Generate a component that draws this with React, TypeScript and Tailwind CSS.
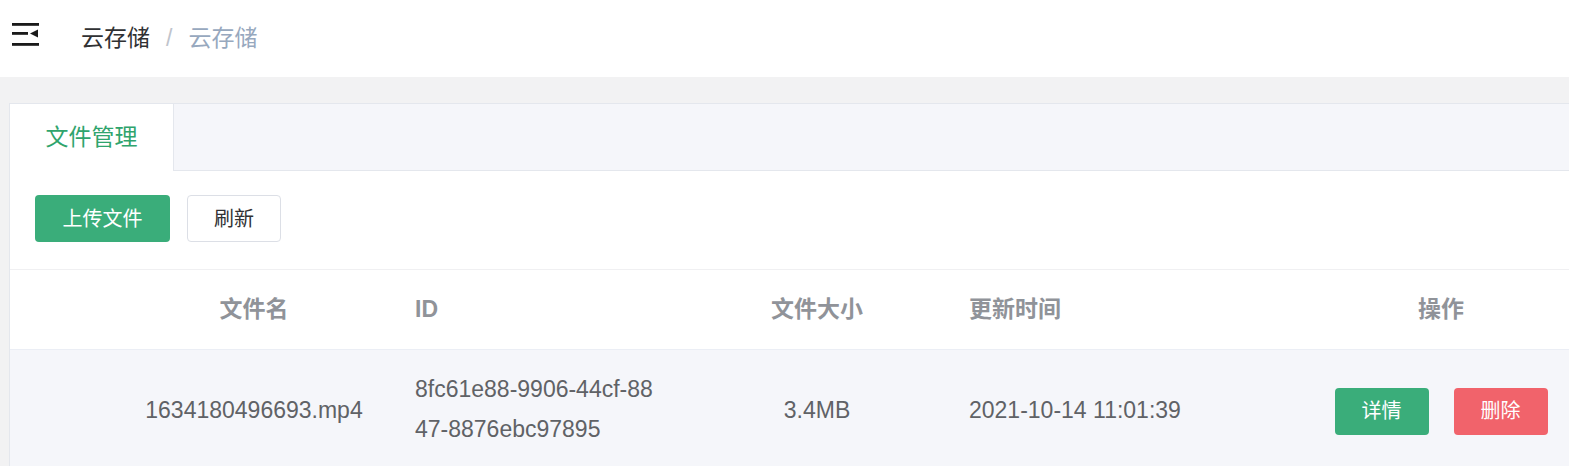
import React from "react";

const font = { fontFamily: '"Helvetica Neue", "Liberation Sans", "Noto Sans CJK SC", sans-serif' };

function Hamburger() {
  return (
    <svg width="27" height="23" viewBox="0 0 27 23" className="block">
      <rect x="0" y="0" width="27" height="2.8" fill="#1a1a1a" />
      <rect x="0" y="9" width="16" height="2.8" fill="#1a1a1a" />
      <polygon points="18,10.4 26,6.4 26,14.4" fill="#1a1a1a" />
      <rect x="0" y="20" width="27" height="2.8" fill="#1a1a1a" />
    </svg>
  );
}

export default function App() {
  return (
    <div className="w-[1569px] h-[466px] overflow-hidden bg-[#f2f2f3]" style={font}>
      {/* Top nav */}
      <div className="h-[77px] bg-white flex items-center">
        <div className="self-start mt-[23px] pl-[12px] pr-[42px]">
          <Hamburger />
        </div>
        <div className="flex items-center text-[23px]">
          <span className="text-[#303133]">云存储</span>
          <span className="text-[#c0c4cc] mx-[16px]">/</span>
          <span className="text-[#97a8be]">云存储</span>
        </div>
      </div>

      {/* Content */}
      <div className="pt-[26px] pl-[9px]">
        <div className="w-[1640px] bg-white border-l border-t border-[#e4e7ed]">
          {/* Tabs */}
          <div className="flex h-[67px] bg-[#f5f6fa] border-b border-[#e4e7ed]">
            <div className="w-[164px] h-[67px] bg-white border-r border-[#e4e7ed] flex items-center justify-center text-[23px] text-[#2fa46d]">
              文件管理
            </div>
          </div>

          {/* Toolbar */}
          <div className="flex items-center gap-[17px] pl-[25px] pt-[24px] pb-[27px] border-b border-[#f0f0f2]">
            <button className="w-[135px] h-[47px] rounded-[4px] bg-[#3aad7a] text-white text-[20px]">
              上传文件
            </button>
            <button className="w-[94px] h-[47px] rounded-[4px] bg-white border border-[#dcdfe6] text-[#303133] text-[20px]">
              刷新
            </button>
          </div>

          {/* Table header */}
          <div className="flex h-[80px] items-center border-b border-[#ebeef5] text-[23px] font-bold text-[#909399]">
            <div className="w-[104px]" />
            <div className="w-[280px] text-center">文件名</div>
            <div className="w-[306px] pl-[21px]">ID</div>
            <div className="w-[234px] text-center">文件大小</div>
            <div className="w-[316px] pl-[35px]">更新时间</div>
            <div className="w-[382px] text-center">操作</div>
          </div>

          {/* Row */}
          <div className="flex h-[120px] items-center bg-[#f5f6fa] text-[23px] text-[#606266]">
            <div className="w-[104px]" />
            <div className="w-[280px] text-center">1634180496693.mp4</div>
            <div className="w-[306px] pl-[21px] leading-[40px] pb-[2px]">
              <div>8fc61e88-9906-44cf-88</div>
              <div>47-8876ebc97895</div>
            </div>
            <div className="w-[234px] text-center">3.4MB</div>
            <div className="w-[316px] pl-[35px]">2021-10-14 11:01:39</div>
            <div className="w-[382px] flex justify-center gap-[25px] pt-[2px]">
              <button className="w-[94px] h-[47px] rounded-[4px] bg-[#3aad7a] text-white text-[20px]">
                详情
              </button>
              <button className="w-[94px] h-[47px] rounded-[4px] bg-[#f1636b] text-white text-[20px]">
                删除
              </button>
            </div>
          </div>
        </div>
      </div>
    </div>
  );
}
